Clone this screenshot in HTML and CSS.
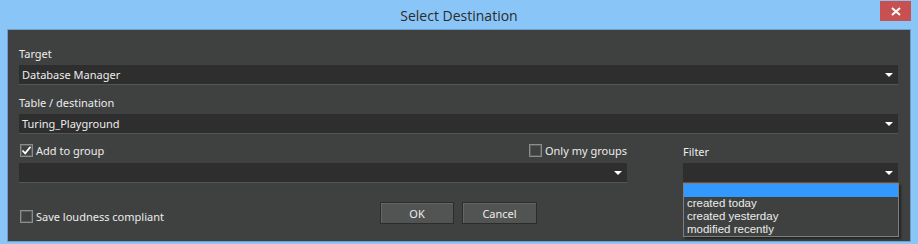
FILE: index.html
```html
<!DOCTYPE html>
<html lang="en">
<head>
<meta charset="UTF-8">
<meta name="viewport" content="width=device-width, initial-scale=1.0">
<title>Select Destination</title>
<link rel="stylesheet" href="styles.css">
</head>
<body>

<div class="window">
  <div class="titlebar">
    <span class="title">Select Destination</span>
    <button class="close-btn" title="Close">
      <svg width="10" height="9" viewBox="0 0 10 9"><path d="M1 1 L9 8 M9 1 L1 8" stroke="#fff" stroke-width="2"/></svg>
    </button>
  </div>

  <div class="dialog">
    <div class="label first">Target</div>
    <div class="select"><span class="value">Database Manager</span><i class="arrow"></i></div>

    <div class="label">Table / destination</div>
    <div class="select"><span class="value">Turing_Playground</span><i class="arrow"></i></div>

    <div class="group-row">
      <div class="group-col">
        <div class="check-row">
          <label class="check"><span class="box checked"><svg width="11" height="11" viewBox="0 0 11 11"><path d="M1.5 5.5 L4.2 8.3 L9.5 1.8" fill="none" stroke="#fff" stroke-width="1.8"/></svg></span>Add to group</label>
          <label class="check"><span class="box"></span>Only my groups</label>
        </div>
        <div class="select"><span class="value"></span><i class="arrow"></i></div>
      </div>
      <div class="filter-col">
        <div class="label">Filter</div>
        <div class="select"><span class="value"></span><i class="arrow"></i></div>
        <ul class="popup">
          <li class="selected"></li>
          <li>created today</li>
          <li>created yesterday</li>
          <li>modified recently</li>
        </ul>
      </div>
    </div>

    <div class="footer">
      <label class="check"><span class="box"></span>Save loudness compliant</label>
      <div class="buttons">
        <button class="btn ok-btn">OK</button>
        <button class="btn">Cancel</button>
      </div>
      <div></div>
    </div>
  </div>
</div>

</body>
</html>
```

FILE: styles.css
```css
body {
  margin: 0;
  padding: 0;
  font-family: "Noto Sans", sans-serif;
  font-size: 11px;
  background: #8ac5f7;
}
.window {
  width: 918px;
  height: 244px;
  box-sizing: border-box;
  background: #8ac5f7;
  padding: 0 7px 8px 7px;
  position: relative;
}
.titlebar {
  height: 29px;
  display: flex;
  align-items: center;
  justify-content: center;
}
.title {
  font-family: "Open Sans", sans-serif;
  font-size: 14px;
  color: #2b2b2b;
  margin-top: 2px;
}
.close-btn {
  position: absolute;
  top: 1px;
  right: 7px;
  width: 31px;
  height: 20px;
  border: none;
  padding: 0;
  background: #c75050;
  display: flex;
  align-items: center;
  justify-content: center;
}
.dialog {
  height: 205px;
  background: #3f4140;
  border: 1px solid #6f9ec6;
  padding: 6px 12px 0 11px;
  color: #ececec;
}
.label {
  padding: 11px 0 5px 0;
  line-height: 13px;
}
.select {
  height: 19px;
  background: #2e2e2e;
  border-bottom: 1px solid #555;
  display: flex;
  align-items: center;
  justify-content: space-between;
  padding: 0 5px 0 3px;
}
.value {
  line-height: 19px;
  white-space: pre;
}
.arrow {
  width: 0;
  height: 0;
  border-left: 4px solid transparent;
  border-right: 4px solid transparent;
  border-top: 4px solid #fff;
  margin-top: 1px;
}
.group-row {
  display: grid;
  grid-template-columns: 608px 1fr;
  column-gap: 56px;
}
.check-row {
  height: 29px;
  display: flex;
  justify-content: space-between;
  align-items: flex-end;
}
.check-row .check {
  margin-bottom: 6px;
}
.check {
  display: flex;
  align-items: center;
  line-height: 13px;
  padding-left: 1px;
}
.box {
  width: 13px;
  height: 13px;
  box-sizing: border-box;
  border: 1px solid #8c8c8c;
  box-shadow: inset 0 0 0 1px #5c5c5c;
  margin-right: 3px;
  display: flex;
  align-items: center;
  justify-content: center;
}
.filter-col {
  position: relative;
}
.popup {
  position: absolute;
  top: 49px;
  left: 0;
  width: 216px;
  box-sizing: border-box;
  margin: 0;
  padding: 0;
  list-style-type: none;
  background: #3f4140;
  border: 1px solid #7f7f7f;
  box-shadow: 2px 2px 2px rgba(0, 0, 0, 0.45);
  z-index: 2;
}
.popup li {
  height: 13px;
  line-height: 13px;
  padding-left: 3px;
  font-family: "Liberation Sans", Arial, sans-serif;
  font-size: 11.5px;
  overflow: hidden;
}
.popup li.selected {
  background: #3399ff;
}
.footer {
  display: grid;
  grid-template-columns: 1fr auto 1fr;
  align-items: start;
  padding-top: 19px;
}
.footer .check {
  margin-top: 8px;
}
.buttons {
  display: flex;
  gap: 8px;
}
.btn {
  width: 75px;
  height: 22px;
  background: #525453;
  border: 1px solid #2c2c2c;
  box-shadow: inset 1px 1px 0 #666;
  color: #ececec;
  font-family: "Noto Sans", sans-serif;
  font-size: 11px;
  padding: 0;
}
.ok-btn {
  width: 74px;
}
```
